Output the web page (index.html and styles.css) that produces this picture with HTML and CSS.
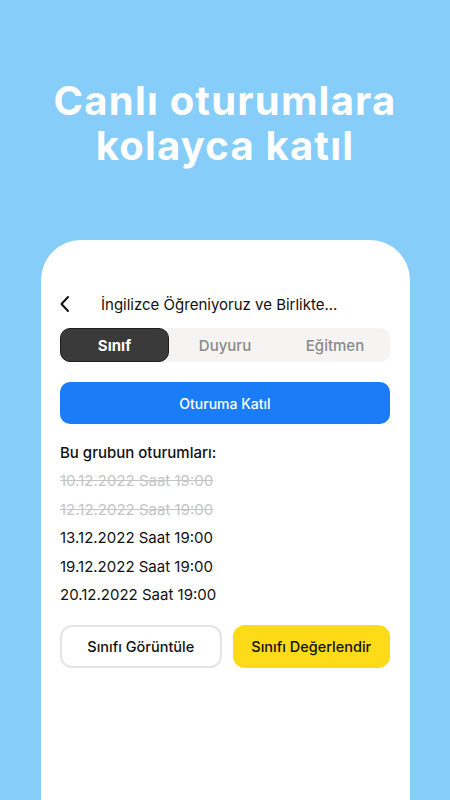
FILE: index.html
```html
<!DOCTYPE html>
<html lang="tr">
  <head>
    <meta charset="UTF-8" />
    <meta name="viewport" content="width=device-width, initial-scale=1.0" />
    <title>Canlı oturumlara kolayca katıl</title>
    <link rel="stylesheet" href="styles.css">
  </head>
  <body>
    <!-- Başlık -->
    <h1 class="headline">Canlı oturumlara<br />kolayca katıl</h1>

    <!-- Telefon ekranı kartı -->
    <main class="phone">
      <div class="topbar">
        <svg class="back-icon" width="12" height="18" viewBox="0 0 12 18">
          <path d="M9 2 L2.5 9 L9 16" fill="none" stroke="#111" stroke-width="2" stroke-linecap="round" stroke-linejoin="round" />
        </svg>
        <span class="topbar-title">İngilizce Öğreniyoruz ve Birlikte...</span>
      </div>

      <!-- Sekmeler -->
      <div class="tabs">
        <div class="tab active">Sınıf</div>
        <div class="tab">Duyuru</div>
        <div class="tab">Eğitmen</div>
      </div>

      <button class="join-btn">Oturuma Katıl</button>

      <!-- Oturum listesi -->
      <p class="list-title">Bu grubun oturumları:</p>
      <ul class="sessions">
        <li class="past">10.12.2022 Saat 19:00</li>
        <li class="past">12.12.2022 Saat 19:00</li>
        <li>13.12.2022 Saat 19:00</li>
        <li>19.12.2022 Saat 19:00</li>
        <li>20.12.2022 Saat 19:00</li>
      </ul>

      <div class="actions">
        <button class="btn btn-outline">Sınıfı Görüntüle</button>
        <button class="btn btn-yellow">Sınıfı Değerlendir</button>
      </div>
    </main>
  </body>
</html>
```

FILE: styles.css
```css
/* Temel sıfırlama */
html,
body,
h1,
p,
ul,
button {
  margin: 0;
  padding: 0;
  box-sizing: border-box;
}

body {
  width: 450px;
  height: 800px;
  overflow: hidden;
  background-color: #86cdf9;
  font-family: Inter, 'Noto Sans', sans-serif;
  color: #111;
}

/* Büyük başlık */
.headline {
  padding-top: 78px;
  text-align: center;
  color: #ffffff;
  font-family: Inter, 'Open Sans', sans-serif;
  font-weight: 700;
  font-size: 40px;
  line-height: 45px;
  letter-spacing: 1.2px;
}

/* Telefon kartı */
.phone {
  margin: 72px 40px 0 41px;
  height: 555px;
  background: #ffffff;
  border-radius: 40px 40px 0 0;
  padding: 52px 20px 0 19px;
}

.topbar {
  display: flex;
  align-items: center;
  height: 24px;
}

.back-icon {
  margin-left: -1px;
  margin-right: 30px;
}

.topbar-title {
  font-size: 15px;
  font-weight: 400;
}

/* Sekmeler */
.tabs {
  display: grid;
  grid-template-columns: 1fr 1fr 1fr;
  height: 34px;
  margin-top: 12px;
  background: #f5f4f3;
  border-radius: 10px;
}

.tab {
  display: flex;
  align-items: center;
  justify-content: center;
  font-size: 15px;
  font-weight: 500;
  color: #8a8a8a;
}

.tab.active {
  background: #3a3a3a;
  border: 1px solid #1e1e1e;
  border-radius: 10px;
  color: #ffffff;
  font-weight: 700;
  margin-right: 1px;
}

.join-btn {
  display: block;
  width: 100%;
  height: 42px;
  margin-top: 20px;
  border: none;
  border-radius: 10px;
  background: #1a7cf7;
  color: #ffffff;
  font-family: inherit;
  font-size: 14px;
  font-weight: 500;
}

.list-title {
  margin-top: 15px;
  font-size: 15px;
  font-weight: 500;
  line-height: 28px;
}

.sessions {
  list-style: none;
}

.sessions li {
  font-size: 15px;
  line-height: 28.5px;
}

.sessions li.past {
  color: #c4c4c4;
  text-decoration: line-through;
}

/* Alt butonlar */
.actions {
  display: flex;
  gap: 11px;
  margin-top: 15px;
}

.btn {
  flex: 1;
  height: 43px;
  border-radius: 12px;
  font-family: inherit;
  font-size: 14.5px;
  font-weight: 500;
  color: #111;
}

.btn-outline {
  background: #ffffff;
  border: 2px solid #e4e4e4;
}

.btn-yellow {
  background: #fddb18;
  border: none;
}
```
